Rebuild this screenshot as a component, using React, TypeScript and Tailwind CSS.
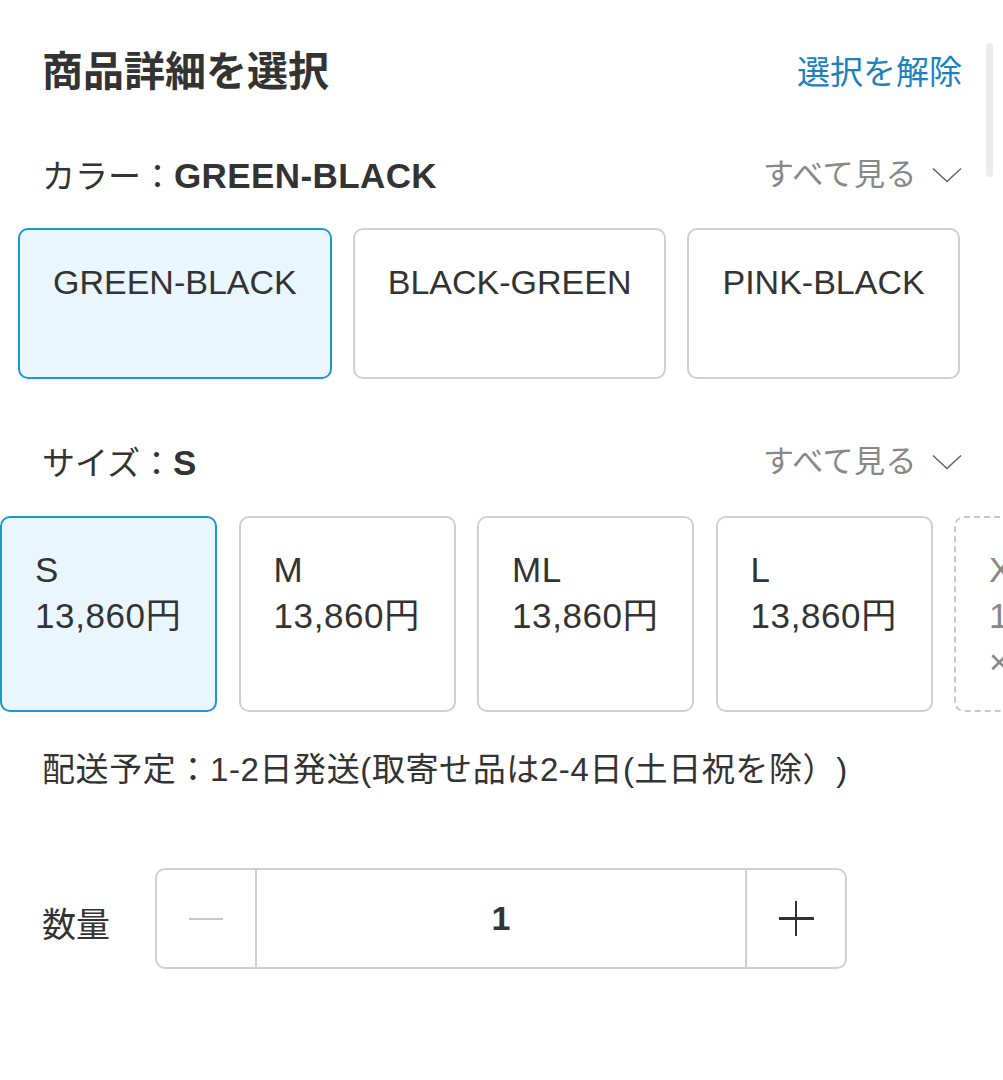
import { useState } from 'react';

const colors = ['GREEN-BLACK', 'BLACK-GREEN', 'PINK-BLACK'];

const sizes = [
  { name: 'S', price: '13,860円', soldOut: false },
  { name: 'M', price: '13,860円', soldOut: false },
  { name: 'ML', price: '13,860円', soldOut: false },
  { name: 'L', price: '13,860円', soldOut: false },
  { name: 'XL', price: '13,860円', soldOut: true },
];

function Chevron() {
  return (
    <svg width="30" height="16" viewBox="0 0 30 16" fill="none" className="ml-[15px]">
      <polyline points="1,1.5 15,14.5 29,1.5" stroke="#666" strokeWidth="1.6" />
    </svg>
  );
}

function SeeAll() {
  return (
    <button className="flex items-center text-[31px] tracking-[0.5px] text-[#888]">
      すべて見る
      <Chevron />
    </button>
  );
}

export default function App() {
  const [color, setColor] = useState('GREEN-BLACK');
  const [size, setSize] = useState('S');
  const [qty, setQty] = useState(1);

  return (
    <div className="relative w-[1003px] h-[1080px] overflow-hidden bg-white text-[#333] [text-spacing-trim:space-all] font-[family-name:'Liberation_Sans','Noto_Sans_CJK_JP',sans-serif]">
      {/* scrollbar */}
      <div className="absolute right-[10px] top-[43px] w-[7px] h-[134px] rounded-full bg-[#ececec]" />

      <div className="pl-[42px] pr-[41px] pt-[32px]">
        {/* header */}
        <div className="flex items-center justify-between h-[80px]">
          <h1 className="text-[41px] font-bold leading-none">商品詳細を選択</h1>
          <button className="text-[33px] text-[#1b82c2] leading-none">選択を解除</button>
        </div>

        {/* color */}
        <div className="mt-[38px] flex items-center justify-between h-[50px]">
          <div className="text-[33px] leading-none">
            カラー：<span className="font-bold text-[35px] tracking-[0.4px]">{color}</span>
          </div>
          <SeeAll />
        </div>
        <div className="mt-[28px] -ml-[24px] flex gap-[21px]">
          {colors.map((c) => (
            <button
              key={c}
              onClick={() => setColor(c)}
              className={`shrink-0 whitespace-nowrap h-[151px] px-[33px] pt-[29px] flex justify-center items-start rounded-[10px] border-2 text-[34px] leading-[46px] ${
                c === color ? 'border-[#1c97cf] bg-[#eaf6fd]' : 'border-[#d0d0d0] bg-white'
              }`}
            >
              {c}
            </button>
          ))}
        </div>

        {/* size */}
        <div className="mt-[58px] flex items-center justify-between h-[50px]">
          <div className="text-[33px] leading-none">
            サイズ：<span className="font-bold text-[35px]">{size}</span>
          </div>
          <SeeAll />
        </div>
      </div>

      <div className="mt-[29px] flex gap-[21.5px]">
        {sizes.map((s) => (
          <button
            key={s.name}
            onClick={() => !s.soldOut && setSize(s.name)}
            className={`shrink-0 w-[217px] h-[196px] pl-[33px] pt-[29px] flex flex-col items-start rounded-[10px] border-2 text-[35px] tracking-[0.6px] leading-[46px] whitespace-nowrap ${
              s.soldOut
                ? 'border-dashed border-[#c8c8c8] text-[#888]'
                : s.name === size
                ? 'border-[#1c97cf] bg-[#eaf6fd]'
                : 'border-[#d0d0d0] bg-white'
            }`}
          >
            <span>{s.name}</span>
            <span>{s.price}</span>
            {s.soldOut && <span>×</span>}
          </button>
        ))}
      </div>

      <div className="pl-[42px] pr-[41px]">
        <p className="mt-[35px] h-[46px] flex items-center text-[33px] tracking-[0.6px] whitespace-nowrap">
          配送予定：1-2日発送(取寄せ品は2-4日(土日祝を除）)
        </p>

        {/* quantity */}
        <div className="mt-[75px] flex items-center">
          <span className="w-[113px] pt-[14px] text-[34px]">数量</span>
          <div className="flex w-[692px] h-[101px] rounded-[10px] border-2 border-[#d0d0d0]">
            <button
              onClick={() => setQty(Math.max(1, qty - 1))}
              className="w-[100px] flex items-center justify-center border-r-2 border-[#d0d0d0]"
            >
              <span className="block w-[34px] h-[2px] bg-[#c8c8c8]" />
            </button>
            <div className="flex-1 flex items-center justify-center text-[34px] font-bold">{qty}</div>
            <button
              onClick={() => setQty(qty + 1)}
              className="relative w-[100px] flex items-center justify-center border-l-2 border-[#d0d0d0]"
            >
              <span className="block w-[35px] h-[2.5px] bg-[#333]" />
              <span className="absolute w-[2.5px] h-[35px] bg-[#333]" />
            </button>
          </div>
        </div>
      </div>
    </div>
  );
}
